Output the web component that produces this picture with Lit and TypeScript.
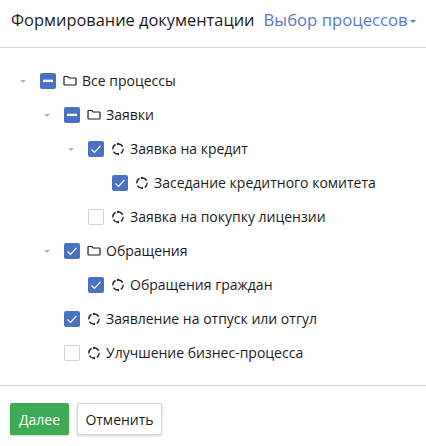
import { LitElement, html, css, svg } from "lit";
import { customElement } from "lit/decorators.js";

type Row = { label: string; level: number; state: "mixed" | "on" | "off"; icon: "folder" | "process"; caret: boolean };

const rows: Row[] = [
  { label: "Все процессы", level: 0, state: "mixed", icon: "folder", caret: true },
  { label: "Заявки", level: 1, state: "mixed", icon: "folder", caret: true },
  { label: "Заявка на кредит", level: 2, state: "on", icon: "process", caret: true },
  { label: "Заседание кредитного комитета", level: 3, state: "on", icon: "process", caret: false },
  { label: "Заявка на покупку лицензии", level: 2, state: "off", icon: "process", caret: false },
  { label: "Обращения", level: 1, state: "on", icon: "folder", caret: true },
  { label: "Обращения граждан", level: 2, state: "on", icon: "process", caret: false },
  { label: "Заявление на отпуск или отгул", level: 1, state: "on", icon: "process", caret: false },
  { label: "Улучшение бизнес-процесса", level: 1, state: "off", icon: "process", caret: false },
];

const folderIcon = svg`<path d="M1 3.2c0-.5.3-.7.7-.7h3.1l1.3 1.5h6.2c.4 0 .7.3.7.7v5.6c0 .4-.3.7-.7.7H1.7c-.4 0-.7-.3-.7-.7z" fill="none" stroke="#1c1c1c" stroke-width="1.2"/>`;
const processIcon = svg`<circle cx="7" cy="7" r="5.2" fill="none" stroke="#1c1c1c" stroke-width="1.3" stroke-dasharray="6 2.17" stroke-dashoffset="1"/>
  <g fill="#1c1c1c"><path d="M6 .6 8.4 1.9 6 3.3z"/><path d="M8 13.4 5.6 12.1 8 10.7z"/></g>`;

@customElement("app-root")
export class AppRoot extends LitElement {
  static styles = css`
    :host {
      display: block;
      width: 426px;
      height: 446px;
      background: #fff;
      font-family: "Open Sans", "Liberation Sans", sans-serif;
      color: #1b1b1b;
      box-sizing: border-box;
    }
    .head {
      height: 48px;
      box-sizing: border-box;
      border-bottom: 1px solid #d2d2d2;
      display: flex;
      align-items: center;
      padding: 0 0 8px 11px;
      gap: 9px;
      font-size: 16.4px;
      white-space: nowrap;
    }
    .select {
      color: #5b79bf;
      display: flex;
      align-items: center;
      gap: 2px;
      font-size: 16.7px;
    }
    .select i {
      width: 0;
      height: 0;
      margin-top: 3px;
      border: 3px solid transparent;
      border-top: 3px solid #5b79bf;
      border-bottom: 0;
    }
    .tree {
      height: 338px;
      box-sizing: border-box;
      padding-top: 16px;
      border-bottom: 1px solid #d2d2d2;
    }
    .row {
      height: 34px;
      display: flex;
      align-items: center;
      font-size: 14px;
      white-space: nowrap;
    }
    .label {
      margin-top: -2px;
    }
    .caret {
      width: 27px;
      box-sizing: border-box;
      padding-left: 7px;
      flex: none;
      display: flex;
    }
    .caret i {
      width: 0;
      height: 0;
      border: 3px solid transparent;
      border-top: 3px solid #b0b0b0;
      border-bottom: 0;
    }
    .box {
      width: 16px;
      height: 16px;
      box-sizing: border-box;
      flex: none;
      border-radius: 2px;
      display: flex;
      align-items: center;
      justify-content: center;
    }
    .box.on, .box.mixed { background: #4a72c0; }
    .box.off { border: 1px solid #d4d4d4; background: #fff; }
    .box svg { display: block; }
    .icon { margin: 0 5px 0 7px; flex: none; display: block; }
    .foot {
      display: flex;
      gap: 8px;
      padding: 17px 0 0 10px;
    }
    button {
      height: 32px;
      box-sizing: border-box;
      font: inherit;
      font-size: 14px;
      border-radius: 2px;
      padding: 0;
    }
    .ok {
      width: 59px;
      background: #3faa56;
      border: 1px solid #3faa56;
      color: #fff;
      box-shadow: 0 1px 2px rgba(0, 0, 0, 0.2);
    }
    .cancel {
      width: 85px;
      background: #fff;
      border: 1px solid #d4d4d4;
      color: #1b1b1b;
      box-shadow: 0 1px 3px rgba(0, 0, 0, 0.2);
    }
  `;

  private renderBox(state: Row["state"]) {
    return html`<span class="box ${state}">
      ${state === "mixed"
        ? html`<svg width="10" height="10" viewBox="0 0 10 10"><rect x="0" y="3.7" width="10" height="2.4" fill="#fff"></rect></svg>`
        : state === "on"
        ? html`<svg width="12" height="12" viewBox="0 0 12 12"><path d="M1.5 6.5 4.5 9.5 10.5 2.8" fill="none" stroke="#fff" stroke-width="1.2"></path></svg>`
        : ""}
    </span>`;
  }

  render() {
    return html`
      <div class="head">
        <span>Формирование документации</span>
        <span class="select">Выбор процессов<i></i></span>
      </div>
      <div class="tree">
        ${rows.map(
          (r) => html`<div class="row" style="padding-left:${13 + r.level * 24}px">
            <span class="caret">${r.caret ? html`<i></i>` : ""}</span>
            ${this.renderBox(r.state)}
            <svg class="icon" width="14" height="14" viewBox="0 0 14 14">${r.icon === "folder" ? folderIcon : processIcon}</svg>
            <span class="label">${r.label}</span>
          </div>`
        )}
      </div>
      <div class="foot">
        <button class="ok">Далее</button>
        <button class="cancel">Отменить</button>
      </div>
    `;
  }
}
